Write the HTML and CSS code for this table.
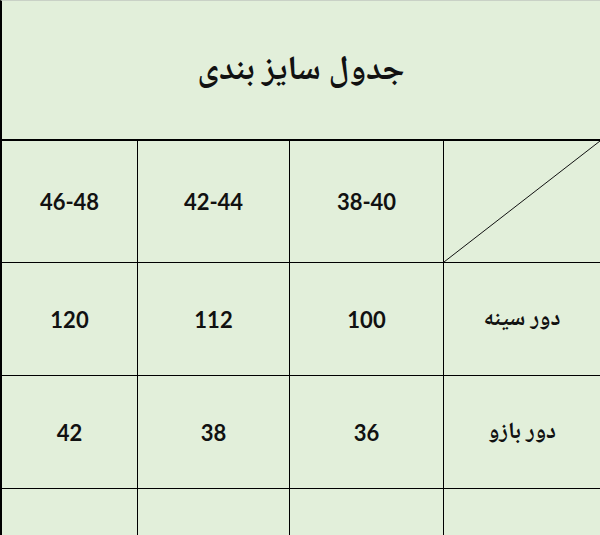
FILE: index.html
```html
<!DOCTYPE html>
<html lang="fa" dir="rtl">
<head>
<meta charset="utf-8">
<title>جدول سایز بندی</title>
<link rel="stylesheet" href="styles.css">
</head>
<body>
<div class="sheet">
  <div class="title">جدول سایز بندی</div>
  <div class="grid">
    <div class="cell corner">
      <svg class="diag" viewBox="0 0 100 100" preserveAspectRatio="none"><line x1="0" y1="100" x2="100" y2="0" stroke="#111" stroke-width="1" vector-effect="non-scaling-stroke"/></svg>
    </div>
    <div class="cell num">38-40</div>
    <div class="cell num">42-44</div>
    <div class="cell num">46-48</div>

    <div class="cell label">دور سینه</div>
    <div class="cell num">100</div>
    <div class="cell num">112</div>
    <div class="cell num">120</div>

    <div class="cell label">دور بازو</div>
    <div class="cell num">36</div>
    <div class="cell num">38</div>
    <div class="cell num">42</div>

    <div class="cell label">قد لباس</div>
    <div class="cell num"></div>
    <div class="cell num"></div>
    <div class="cell num"></div>
  </div>
</div>
</body>
</html>
```
FILE: styles.css
```css
html, body {
  margin: 0;
  padding: 0;
  background: #e2efda;
  overflow: hidden;
}

.sheet {
  width: 600px;
  height: 535px;
  box-sizing: border-box;
  border-top: 1px solid #c9d1c6;
  border-left: 2px solid #000;
  background: #e2efda;
  display: flex;
  flex-direction: column;
  overflow: hidden;
}

.title {
  flex: 0 0 140px;
  box-sizing: border-box;
  border-bottom: 2px solid #000;
  display: flex;
  align-items: center;
  justify-content: center;
  font-family: "Noto Naskh Arabic", "Noto Sans Arabic", "DejaVu Sans", sans-serif;
  font-weight: bold;
  font-size: 34px;
  color: #111;
  padding-top: 4px;
}

.grid {
  flex: 0 0 auto;
  direction: rtl;
  display: grid;
  grid-template-columns: 156px 153px 151px 135px;
  grid-template-rows: 121px 112px 112px 112px;
  gap: 1px;
  background: #000;
}

.cell {
  background: #e2efda;
  display: flex;
  align-items: center;
  justify-content: center;
  color: #111;
  position: relative;
}

.num {
  font-family: Lato, "Liberation Sans", sans-serif;
  font-weight: bold;
  font-size: 22px;
  direction: ltr;
}

.label {
  font-family: "Noto Naskh Arabic", "Noto Sans Arabic", "DejaVu Sans", sans-serif;
  font-weight: bold;
  font-size: 23px;
  padding-top: 2px;
}

.diag {
  position: absolute;
  inset: 0;
  width: 100%;
  height: 100%;
}
```
